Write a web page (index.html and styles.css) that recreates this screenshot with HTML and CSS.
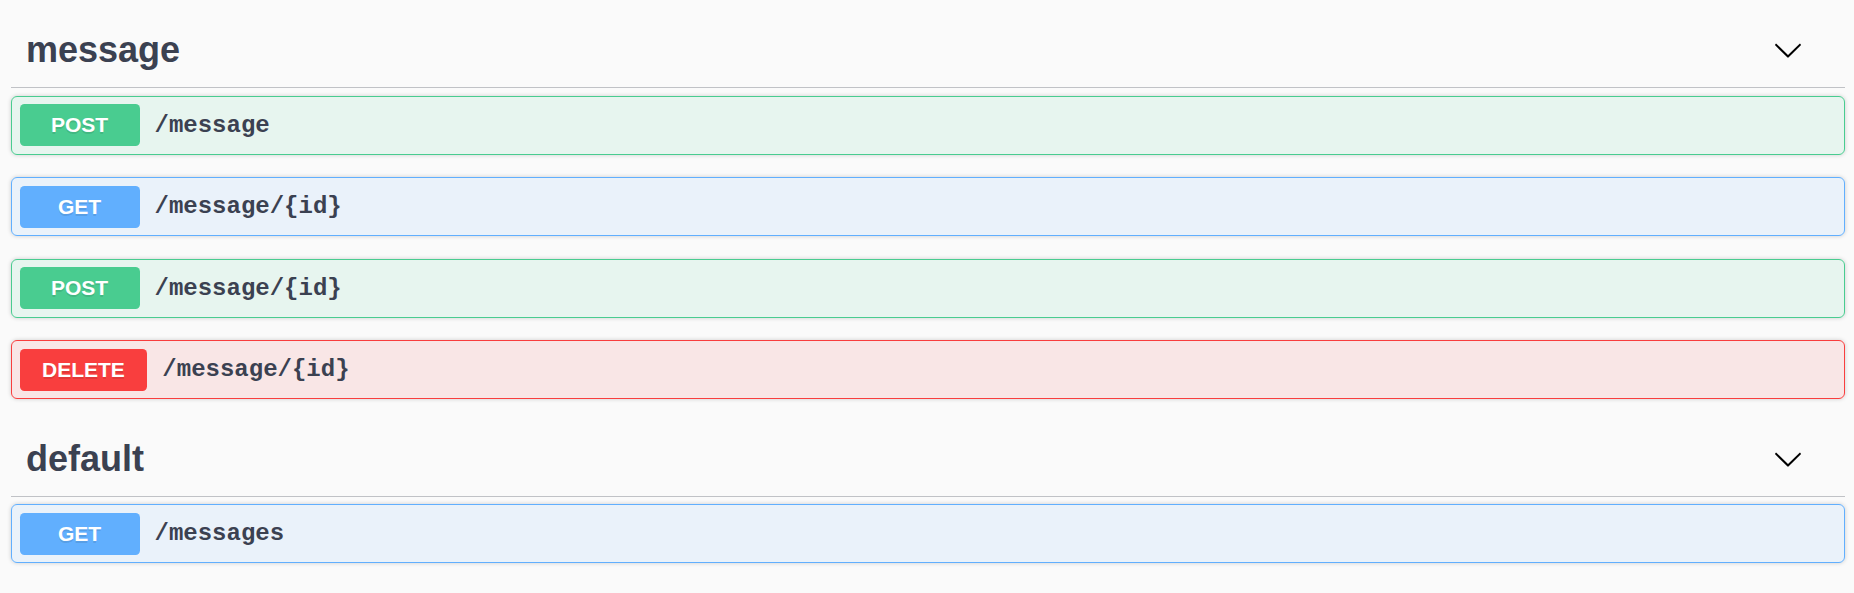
FILE: index.html
```html
<!DOCTYPE html>
<html>
<head>
<meta charset="utf-8">
<link rel="stylesheet" href="styles.css">
</head>
<body>
<div class="wrapper">
  <section class="tag-section">
    <h3 class="tag">
      <span class="tag-name">message</span>
      <button class="expand" aria-label="collapse">
        <svg viewBox="0 0 20 20" width="30" height="30"><path d="M17.418 6.109c.272-.268.709-.268.979 0s.271.701 0 .969l-7.908 7.83c-.27.268-.707.268-.979 0l-7.908-7.830c-.27-.268-.27-.701 0-.969.271-.268.709-.268.979 0L10 13.25l7.418-7.141z"/></svg>
      </button>
    </h3>
    <div class="ops">
      <div class="op op-post"><span class="method">POST</span><span class="path">/message</span></div>
      <div class="op op-get"><span class="method">GET</span><span class="path">/message/{id}</span></div>
      <div class="op op-post"><span class="method">POST</span><span class="path">/message/{id}</span></div>
      <div class="op op-delete"><span class="method">DELETE</span><span class="path">/message/{id}</span></div>
    </div>
  </section>
  <section class="tag-section">
    <h3 class="tag">
      <span class="tag-name">default</span>
      <button class="expand" aria-label="collapse">
        <svg viewBox="0 0 20 20" width="30" height="30"><path d="M17.418 6.109c.272-.268.709-.268.979 0s.271.701 0 .969l-7.908 7.83c-.27.268-.707.268-.979 0l-7.908-7.830c-.27-.268-.27-.701 0-.969.271-.268.709-.268.979 0L10 13.25l7.418-7.141z"/></svg>
      </button>
    </h3>
    <div class="ops">
      <div class="op op-get"><span class="method">GET</span><span class="path">/messages</span></div>
    </div>
  </section>
</div>
</body>
</html>
```
FILE: styles.css
```css
html, body {
  margin: 0;
  padding: 0;
  background: #fafafa;
  font-family: "Liberation Sans", Arial, sans-serif;
  color: #3b4151;
}

.wrapper {
  padding: 13px 9px 0 11px;
}

.tag-section {
  display: flex;
  flex-direction: column;
}

.tag {
  display: flex;
  align-items: center;
  margin: 0 0 7.5px;
  padding: 15px 30px 15px 15px;
  height: 44px;
  border-bottom: 1px solid rgba(59, 65, 81, 0.3);
}

.tag-name {
  flex: 1;
  font-size: 36px;
  font-weight: 700;
  color: #3b4151;
}

.expand {
  border: none;
  background: none;
  padding: 0;
  margin: 0 12px 0 0;
  display: flex;
  align-items: center;
}

.expand svg {
  display: block;
  fill: #000;
}

.ops {
  display: flex;
  flex-direction: column;
}

.op {
  display: flex;
  align-items: center;
  margin: 0 0 22.5px;
  padding: 7.5px;
  border: 1px solid;
  border-radius: 6px;
  box-shadow: 0 0 4.5px rgba(0, 0, 0, 0.19);
}

.method {
  min-width: 120px;
  box-sizing: border-box;
  height: 42px;
  display: flex;
  align-items: center;
  justify-content: center;
  padding: 0 22.5px;
  border-radius: 4.5px;
  color: #fff;
  font-size: 21px;
  font-weight: 700;
  text-shadow: 0 1.5px 0 rgba(0, 0, 0, 0.1);
}

.path {
  padding: 0 15px;
  font-family: "Liberation Mono", "Courier New", monospace;
  font-weight: 700;
  font-size: 24px;
  color: #3b4151;
}

.op-post {
  background: rgba(73, 204, 144, 0.1);
  border-color: #49cc90;
}
.op-post .method { background: #49cc90; }

.op-get {
  background: rgba(97, 175, 254, 0.1);
  border-color: #61affe;
}
.op-get .method { background: #61affe; }

.op-delete {
  background: rgba(249, 62, 62, 0.1);
  border-color: #f93e3e;
}
.op-delete .method { background: #f93e3e; }
```
